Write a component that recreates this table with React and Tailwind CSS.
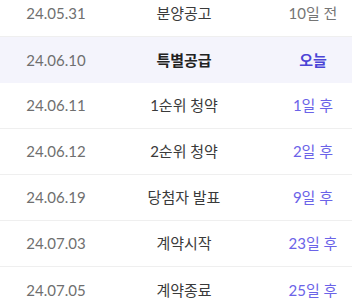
import React from "react";

const ROWS = [
  { date: "24.05.31", label: "분양공고", dday: "10일 전", past: true },
  { date: "24.06.10", label: "특별공급", dday: "오늘", today: true },
  { date: "24.06.11", label: "1순위 청약", dday: "1일 후" },
  { date: "24.06.12", label: "2순위 청약", dday: "2일 후" },
  { date: "24.06.19", label: "당첨자 발표", dday: "9일 후" },
  { date: "24.07.03", label: "계약시작", dday: "23일 후" },
  { date: "24.07.05", label: "계약종료", dday: "25일 후" }
];

const Row = ({ row, last }) => {
  let ddayClass = "text-[#6b63e8]";
  if (row.past) ddayClass = "text-[#757575]";
  if (row.today) ddayClass = "text-[#4b44d6] font-bold";

  return (
    <div
      className={`grid grid-cols-[112px_144px_1fr] items-center h-[46px] ${
        row.today ? "bg-[#f4f4fc]" : "border-b border-[#efefef]"
      } ${last ? "border-b-0" : ""}`}
    >
      <span className="text-center text-[#6f6f6f]">{row.date}</span>
      <span
        className={`text-center ${
          row.today ? "font-bold text-[#222]" : "text-[#3a3a3a]"
        }`}
      >
        {row.label}
      </span>
      <span className={`pl-[18px] text-center ${ddayClass}`}>{row.dday}</span>
    </div>
  );
};

export default function App() {
  return (
    <div
      className="w-[352px] h-[304px] overflow-hidden bg-white text-[15px]"
      style={{ fontFamily: "Lato, 'Noto Sans CJK KR', sans-serif" }}
    >
      <div className="-mt-[9px]">
        {ROWS.map((row, i) => (
          <Row key={row.date} row={row} last={i === ROWS.length - 1} />
        ))}
      </div>
    </div>
  );
}
